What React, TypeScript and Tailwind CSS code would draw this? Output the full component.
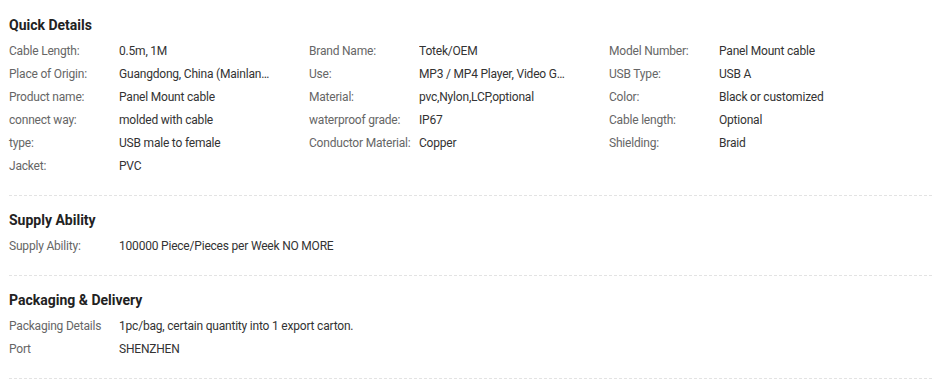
const quickDetails: [string, string][] = [
  ["Cable Length:", "0.5m, 1M"],
  ["Brand Name:", "Totek/OEM"],
  ["Model Number:", "Panel Mount cable"],
  ["Place of Origin:", "Guangdong, China (Mainland)"],
  ["Use:", "MP3 / MP4 Player, Video Game Player"],
  ["USB Type:", "USB A"],
  ["Product name:", "Panel Mount cable"],
  ["Material:", "pvc,Nylon,LCP,optional"],
  ["Color:", "Black or customized"],
  ["connect way:", "molded with cable"],
  ["waterproof grade:", "IP67"],
  ["Cable length:", "Optional"],
  ["type:", "USB male to female"],
  ["Conductor Material:", "Copper"],
  ["Shielding:", "Braid"],
  ["Jacket:", "PVC"],
];

const supply: [string, string][] = [
  ["Supply Ability:", "100000 Piece/Pieces per Week NO MORE"],
];

const packaging: [string, string][] = [
  ["Packaging Details", "1pc/bag, certain quantity into 1 export carton."],
  ["Port", "SHENZHEN"],
];

const Row = ({ label, value, wide }: { label: string; value: string; wide?: boolean }) => (
  <div className="flex h-[23px] items-center text-[12px] tracking-[-0.2px]">
    <span className="w-[110px] shrink-0 text-[#666]">{label}</span>
    <span className={`truncate text-[#333] ${wide ? "" : "w-[152px]"}`}>{value}</span>
  </div>
);

const Section = ({
  title,
  rows,
  grid,
  first,
}: {
  title: string;
  rows: [string, string][];
  grid?: boolean;
  first?: boolean;
}) => (
  <div
    className={`border-b border-dashed border-[#e3e3e3] pb-[18px] ${first ? "pt-[15px]" : "pt-[14px]"}`}
  >
    <h2 className="mb-[4px] h-[20px] text-[14px] leading-[20px] font-bold text-[#222]">
      {title}
    </h2>
    {grid ? (
      <div className="grid grid-cols-[300px_300px_300px]">
        {rows.map(([l, v]) => (
          <Row key={l} label={l} value={v} />
        ))}
      </div>
    ) : (
      rows.map(([l, v]) => <Row key={l} label={l} value={v} wide />)
    )}
  </div>
);

const App = () => (
  <div
    className="min-h-screen bg-white pl-[9px]"
    style={{ fontFamily: "Roboto, 'Liberation Sans', sans-serif" }}
  >
    <Section title="Quick Details" rows={quickDetails} grid first />
    <Section title="Supply Ability" rows={supply} />
    <Section title="Packaging & Delivery" rows={packaging} />
  </div>
);

export default App;
